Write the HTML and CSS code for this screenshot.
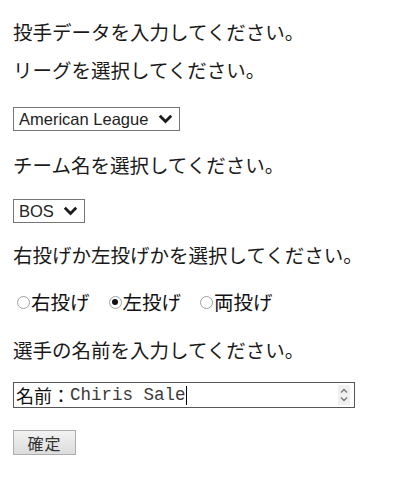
FILE: index.html
```html
<!DOCTYPE html>
<html lang="ja">
<head>
  <meta charset="UTF-8">
  <title>投手データ入力</title>
  <link rel="stylesheet" href="styles.css">
</head>
<body>
  <form class="pitcher-form">
    <p class="label first">投手データを入力してください。</p>
    <p class="label">リーグを選択してください。</p>
    <div class="select league">
      <span>American League</span>
      <svg class="chev" width="15" height="10" viewBox="0 0 15 10"><path d="M1.8 1.8 L7.5 7.5 L13.2 1.8" fill="none" stroke="#1a1a1a" stroke-width="2.8"/></svg>
    </div>
    <p class="label">チーム名を選択してください。</p>
    <div class="select team">
      <span>BOS</span>
      <svg class="chev" width="15" height="10" viewBox="0 0 15 10"><path d="M1.8 1.8 L7.5 7.5 L13.2 1.8" fill="none" stroke="#1a1a1a" stroke-width="2.8"/></svg>
    </div>
    <p class="label">右投げか左投げかを選択してください。</p>
    <div class="radios">
      <label class="radio-item"><span class="radio"></span>右投げ</label>
      <label class="radio-item"><span class="radio checked"></span>左投げ</label>
      <label class="radio-item"><span class="radio"></span>両投げ</label>
    </div>
    <p class="label">選手の名前を入力してください。</p>
    <div class="name-box">
      <span class="ja">名前：</span><span class="mono">Chiris Sale</span><span class="caret"></span>
      <svg class="spin" width="12" height="20" viewBox="0 0 12 20"><path d="M3 7.5 L6 4.5 L9 7.5" fill="none" stroke="#777" stroke-width="1.4"/><path d="M3 12.5 L6 15.5 L9 12.5" fill="none" stroke="#777" stroke-width="1.4"/></svg>
    </div>
    <button type="button" class="ok">確定</button>
  </form>
</body>
</html>
```

FILE: styles.css
```css
body {
  margin: 0;
  padding: 20px 13px;
  background: #fff;
  color: #111;
  font-family: "Noto Sans CJK JP", "Noto Sans", sans-serif;
}
.pitcher-form {
  display: flex;
  flex-direction: column;
  align-items: flex-start;
}
.label {
  margin: 0;
  font-size: 19.5px;
  line-height: 24px;
  color: #1a1a1a;
}
.label + .label { margin-top: 14px; }
.select {
  display: inline-flex;
  align-items: center;
  justify-content: space-between;
  height: 24px;
  box-sizing: border-box;
  padding: 0 6px 0 5px;
  border: 1px solid #767676;
  font-family: "Liberation Sans", Arial, sans-serif;
  font-size: 16.5px;
  color: #222;
}
.select.league {
  width: 167px;
  margin: 25px 0 22px;
}
.select.team {
  width: 72px;
  margin: 22px 0 20px;
}
.radios {
  display: flex;
  gap: 19px;
  margin: 23px 0 24px 4px;
  font-size: 19.5px;
  line-height: 24px;
}
.radio-item {
  display: flex;
  align-items: center;
  gap: 1px;
}
.radio {
  width: 11px;
  height: 11px;
  border: 1.5px solid #a0a0a0;
  border-radius: 50%;
  position: relative;
}
.radio.checked::after {
  content: "";
  position: absolute;
  left: 2.5px;
  top: 2.5px;
  width: 6px;
  height: 6px;
  border-radius: 50%;
  background: #111;
}
.name-box {
  display: flex;
  align-items: center;
  width: 342px;
  height: 26px;
  box-sizing: border-box;
  margin-top: 20px;
  padding: 0 4px 0 2px;
  border: 1px solid #555;
}
.ja { font-size: 18px; color: #111; }
.mono {
  font-family: "Liberation Mono", "Courier New", monospace;
  font-size: 17.5px;
  color: #3a3a3a;
}
.caret {
  width: 1px;
  height: 19px;
  background: #000;
}
.spin {
  margin-left: auto;
  background: #f0f0f0;
}
.ok {
  margin-top: 22px;
  width: 63px;
  height: 25px;
  border: 1px solid #adadad;
  border-radius: 0;
  background: linear-gradient(#f2f2f2, #dcdcdc);
  font-family: "Noto Sans CJK JP", sans-serif;
  font-size: 16px;
  letter-spacing: 1px;
  color: #333;
  padding: 0;
}
```
